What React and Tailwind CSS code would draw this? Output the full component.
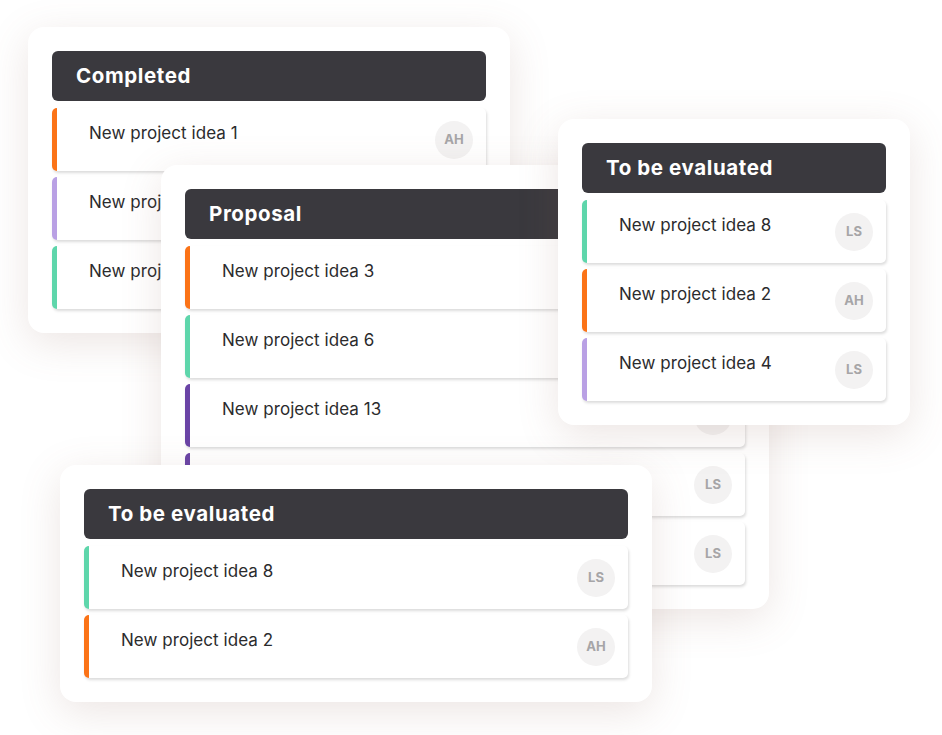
import React from 'react';

const stripe = {
  orange: 'border-l-[#fb7317]',
  lilac: 'border-l-[#b9a0e4]',
  green: 'border-l-[#5ed6ab]',
  purple: 'border-l-[#6a44a6]',
};

const boards = [
  {
    title: 'Completed',
    pos: 'left-[28px] top-[27px] w-[482px]',
    items: [
      { name: 'New project idea 1', color: 'orange', who: 'AH' },
      { name: 'New project idea 5', color: 'lilac', who: 'LS' },
      { name: 'New project idea 7', color: 'green', who: 'AH' },
    ],
  },
  {
    title: 'Proposal',
    pos: 'left-[161px] top-[165px] w-[608px]',
    items: [
      { name: 'New project idea 3', color: 'orange', who: 'AH' },
      { name: 'New project idea 6', color: 'green', who: 'LS' },
      { name: 'New project idea 13', color: 'purple', who: 'LS' },
      { name: 'New project idea 9', color: 'purple', who: 'LS' },
      { name: 'New project idea 10', color: 'green', who: 'LS' },
    ],
  },
  {
    title: 'To be evaluated',
    pos: 'left-[558px] top-[119px] w-[352px]',
    items: [
      { name: 'New project idea 8', color: 'green', who: 'LS' },
      { name: 'New project idea 2', color: 'orange', who: 'AH' },
      { name: 'New project idea 4', color: 'lilac', who: 'LS' },
    ],
  },
  {
    title: 'To be evaluated',
    pos: 'left-[60px] top-[465px] w-[592px]',
    items: [
      { name: 'New project idea 8', color: 'green', who: 'LS' },
      { name: 'New project idea 2', color: 'orange', who: 'AH' },
    ],
  },
];

const Row = ({ name, color, who }) => (
  <div
    className={`flex justify-between h-[63px] bg-white rounded-[5px] border-l-[5px] ${stripe[color]} shadow-[1px_2px_3px_rgba(0,0,0,0.14)]`}
  >
    <span className="pl-8 pt-[13px] text-[17px] leading-6 text-[#2b2b2d] tracking-[0.05px]">
      {name}
    </span>
    <div className="self-center mr-[13px] w-[38px] h-[38px] rounded-full bg-[#f3f2f2] flex items-center justify-center text-[13px] font-bold text-[#a6a5a7]">
      {who}
    </div>
  </div>
);

const Board = ({ title, pos, items }) => (
  <div
    className={`absolute ${pos} bg-white rounded-[16px] p-6 shadow-[0_10px_40px_rgba(140,100,90,0.17)]`}
  >
    <div className="h-[50px] rounded-[6px] bg-[#3a393e] flex items-center px-6 text-white text-[20.5px] font-bold tracking-[0.6px]">
      {title}
    </div>
    <div className="mt-[7px] flex flex-col gap-[6px]">
      {items.map((it, i) => (
        <Row key={i} {...it} />
      ))}
    </div>
  </div>
);

export default function App() {
  return (
    <div
      className="relative w-[942px] h-[735px] bg-white overflow-hidden"
      style={{ fontFamily: 'Inter, "Noto Sans", sans-serif' }}
    >
      {boards.map((b, i) => (
        <Board key={i} {...b} />
      ))}
    </div>
  );
}
